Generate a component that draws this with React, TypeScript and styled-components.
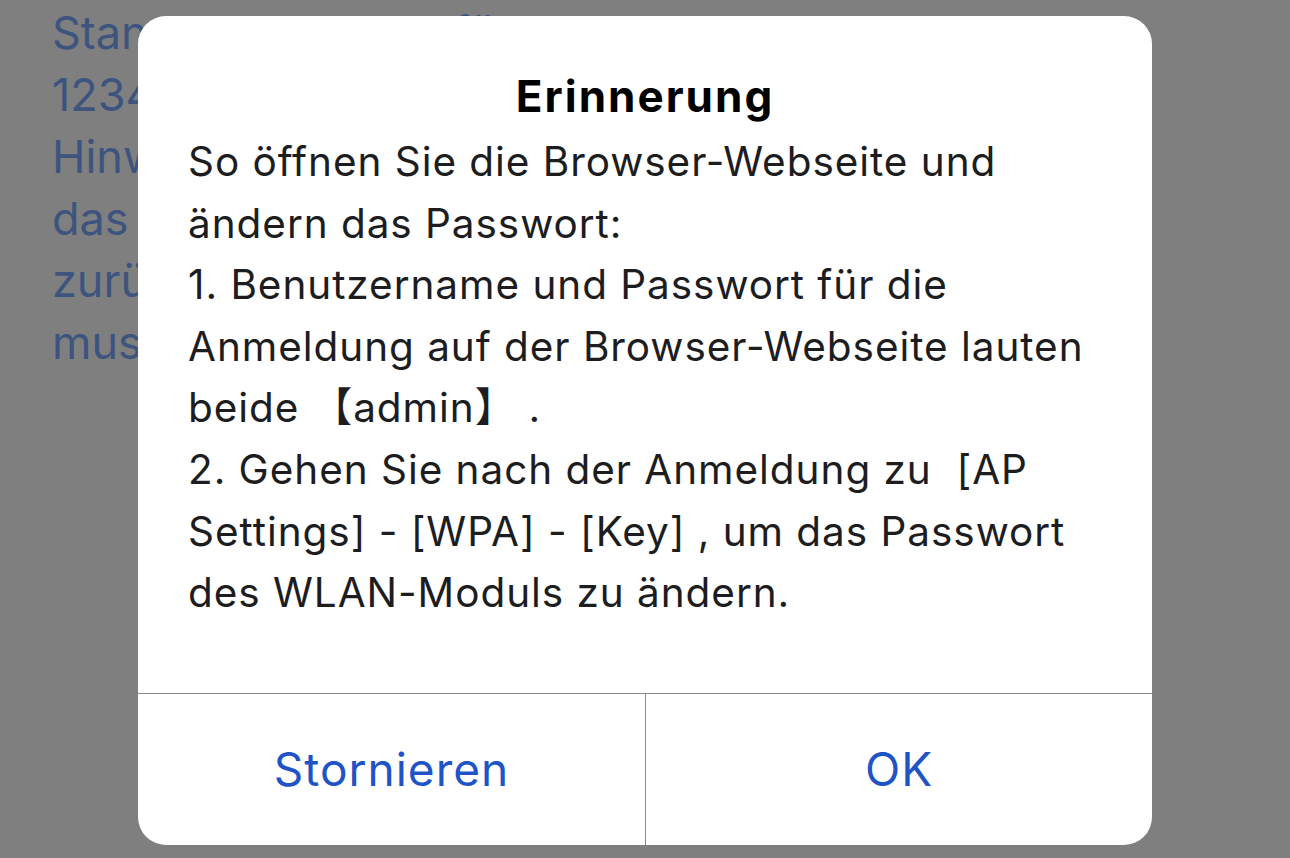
import { createGlobalStyle } from "styled-components";
import styled from "styled-components";

const GlobalStyle = createGlobalStyle`
    html, body {
        margin: 0;
        padding: 0;
        height: 100%;
        background: #ffffff;
    }
    #root {
        height: 100%;
    }
`;

const Page = styled.div`
    position: relative;
    height: 858px;
    overflow: hidden;
    background: #ffffff;
    font-family: Inter, "Noto Sans", "Noto Sans CJK SC", sans-serif;
`;

const Info = styled.div`
    padding: 2px 0 0 52px;
    color: #7aa9ff;
    font-size: 45px;
    line-height: 62px;
`;

const InfoLine = styled.div`
    white-space: nowrap;
`;

const Backdrop = styled.div`
    position: absolute;
    inset: 0;
    background: rgba(0, 0, 0, 0.5);
    display: flex;
    justify-content: center;
    align-items: flex-start;
    padding-top: 16px;
`;

const Dialog = styled.div`
    width: 1014px;
    height: 829px;
    background: #ffffff;
    border-radius: 28px;
    display: flex;
    flex-direction: column;
    overflow: hidden;
`;

const Content = styled.div`
    flex: 1;
    padding: 52px 40px 0 50px;
`;

const Title = styled.h2`
    margin: 0 0 0 -10px;
    text-align: center;
    font-size: 44px;
    font-weight: 700;
    line-height: 56px;
    color: #000000;
    letter-spacing: 2px;
`;

const Message = styled.div`
    margin-top: 7px;
    font-size: 40.5px;
    line-height: 61.6px;
    letter-spacing: 0.95px;
    color: #1d1d1f;
`;

const Line = styled.div`
    white-space: pre;
`;

const Actions = styled.div`
    height: 151px;
    border-top: 1.5px solid #8a8a8a;
    display: grid;
    grid-template-columns: 508px 1fr;
`;

const ActionButton = styled.button<{ $divider?: boolean }>`
    border: none;
    background: transparent;
    padding: 0 0 2px 0;
    font-family: Inter, "Noto Sans", sans-serif;
    font-size: 46px;
    letter-spacing: 1px;
    color: #1f54c7;
    cursor: pointer;
    border-right: ${(p) => (p.$divider ? "1.5px solid #8a8a8a" : "none")};
`;

const infoLines = [
    "Standardpasswort für das WLAN-Modul lautet",
    "12345678",
    "Hinweis: Nach dem Zurücksetzen des Moduls wird",
    "das Passwort auf den Standardwert",
    "zurückgesetzt und die Verbindung",
    "muss neu hergestellt werden.",
];

const messageLines = [
    "So öffnen Sie die Browser-Webseite und",
    "ändern das Passwort:",
    "1. Benutzername und Passwort für die",
    "Anmeldung auf der Browser-Webseite lauten",
    "beide \u3010admin\u3011 .",
    "2. Gehen Sie nach der Anmeldung zu  [AP",
    "Settings] - [WPA] - [Key] , um das Passwort",
    "des WLAN-Moduls zu ändern.",
];

function App() {
    return (
        <Page>
            <GlobalStyle />
            <Info>
                {infoLines.map((l) => (
                    <InfoLine key={l}>{l}</InfoLine>
                ))}
            </Info>
            <Backdrop>
                <Dialog>
                    <Content>
                        <Title>Erinnerung</Title>
                        <Message>
                            {messageLines.map((l) => (
                                <Line key={l}>{l}</Line>
                            ))}
                        </Message>
                    </Content>
                    <Actions>
                        <ActionButton $divider>Stornieren</ActionButton>
                        <ActionButton>OK</ActionButton>
                    </Actions>
                </Dialog>
            </Backdrop>
        </Page>
    );
}

export default App;
